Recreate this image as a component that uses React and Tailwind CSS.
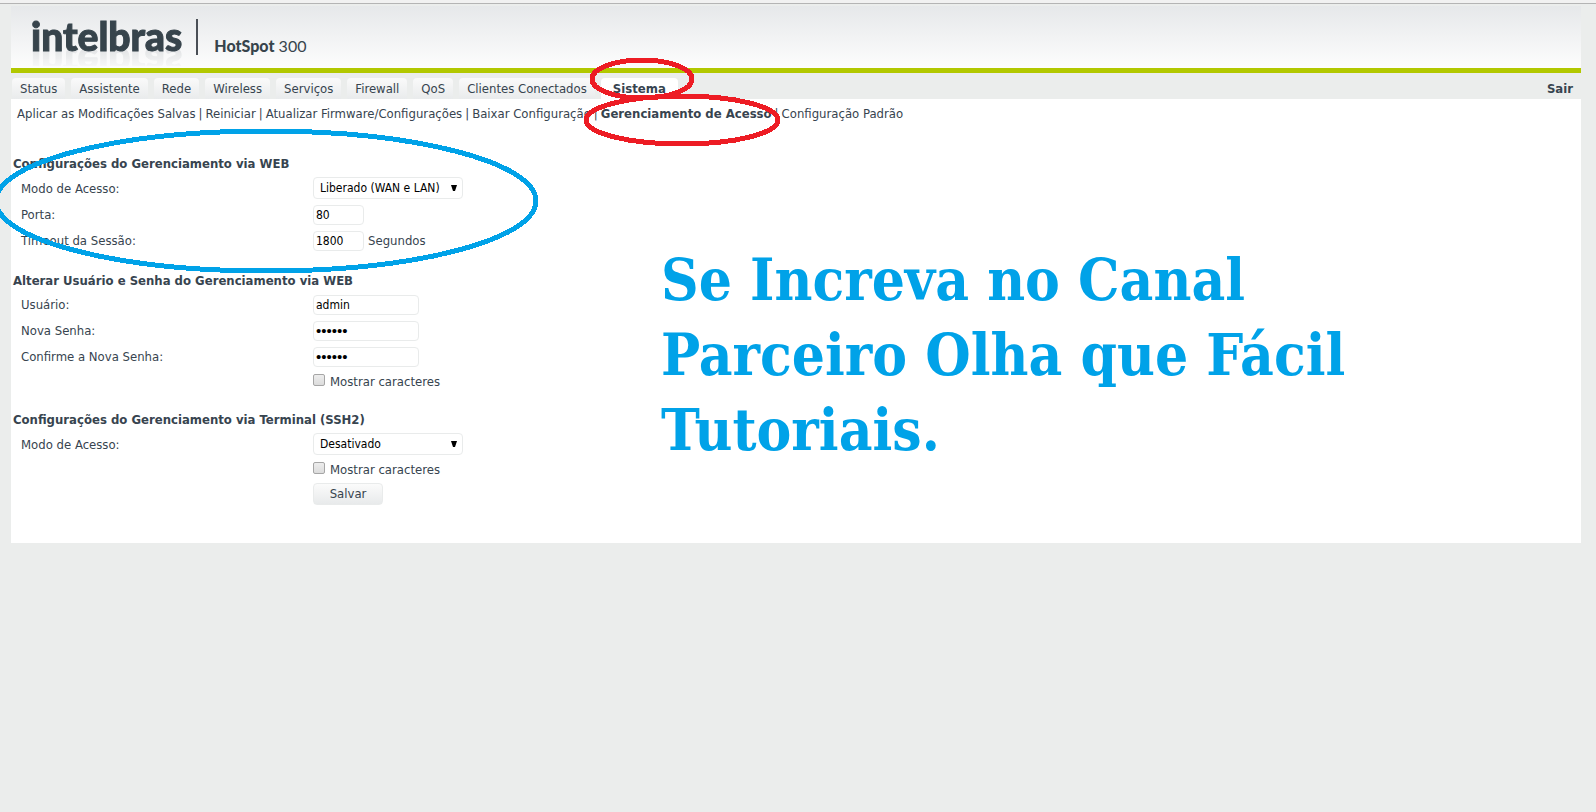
const TABS = [
  "Status",
  "Assistente",
  "Rede",
  "Wireless",
  "Serviços",
  "Firewall",
  "QoS",
  "Clientes Conectados",
];

const SUBMENU = [
  "Aplicar as Modificações Salvas",
  "Reiniciar",
  "Atualizar Firmware/Configurações",
  "Baixar Configuração",
  "Gerenciamento de Acesso",
  "Configuração Padrão",
];

const FIELD =
  "h-5 rounded border border-[#e9ebeb] bg-white px-0.5 text-black outline-none";
const PASSWORD = "font-['Liberation_Sans',sans-serif] text-[15px] w-[106px]";

function Header() {
  return (
    <header className="flex h-[67px] border-b-5 border-[#b2c800] bg-linear-to-b from-[#e6e8ea] to-[#fdfdfd] pl-5">
      <div className="mt-2 h-13 overflow-hidden">
        <div className="font-['Lato','Liberation_Sans',sans-serif] text-[39px] leading-[44px] font-black text-[#37444c] [-webkit-text-stroke:1px_#37444c] [-webkit-box-reflect:below_-17px_linear-gradient(transparent_30%,rgba(0,0,0,0.14))]">
          intelbras
        </div>
      </div>
      <div className="mt-[13px] ml-[14px] h-9 w-0.5 bg-[#4a4f56]" />
      <p className="mt-[30px] ml-4 font-['Lato','Liberation_Sans',sans-serif] text-base leading-5 text-[#37444c]">
        <span className="font-black">HotSpot</span> 300
      </p>
    </header>
  );
}

function Nav() {
  return (
    <nav className="flex h-[26px] items-end pl-px">
      <div className="flex items-end gap-1.5">
        {TABS.map((tab) => (
          <a
            key={tab}
            href="#"
            className="h-[21px] rounded-t bg-linear-to-b from-[#fafafa] to-[#e9ebec] px-2 leading-[22px]"
          >
            {tab}
          </a>
        ))}
        <a href="#" className="h-[21px] rounded-t bg-white px-3 leading-[22px] font-bold">
          Sistema
        </a>
      </div>
      <a href="#" className="mr-2 ml-auto h-[21px] leading-[22px] font-bold">
        Sair
      </a>
    </nav>
  );
}

function Submenu() {
  return (
    <div className="flex h-[30px] items-center gap-[3px] pl-1.5">
      {SUBMENU.map((item, i) => (
        <span key={item} className="flex gap-[3px]">
          {i > 0 && <span>|</span>}
          <a href="#" className={item === "Gerenciamento de Acesso" ? "font-bold" : ""}>
            {item}
          </a>
        </span>
      ))}
    </div>
  );
}

function Section({ title, children }) {
  return (
    <section>
      <h2 className="h-6 leading-[26px] font-bold">{title}</h2>
      {children}
    </section>
  );
}

function Row({ label, id, children }) {
  return (
    <div className="grid min-h-[26px] grid-cols-[292px_1fr] items-center pl-2">
      <label htmlFor={id}>{label}</label>
      <div className="flex items-center">{children}</div>
    </div>
  );
}

function Select({ id, value, options }) {
  return (
    <div className="relative mt-0.5 mb-[3px] w-[150px]">
      <select
        id={id}
        defaultValue={value}
        className="block h-[22px] w-full appearance-none rounded border border-[#e9ebeb] bg-white pl-1.5 text-xs text-black"
      >
        {options.map((o) => (
          <option key={o}>{o}</option>
        ))}
      </select>
      <svg
        className="pointer-events-none absolute top-2 right-1.5"
        width="6"
        height="6"
        viewBox="0 0 6 6"
      >
        <path d="M0 0h6L4 6H2z" fill="black" />
      </svg>
    </div>
  );
}

function ShowChars({ id }) {
  return (
    <div className="flex h-[23px] items-center gap-[5px] pl-[300px]">
      <input
        id={id}
        type="checkbox"
        className="mb-1 size-3 appearance-none rounded-xs border border-[#a6a6a6] bg-linear-to-b from-[#ededed] to-[#dcdcdc]"
      />
      <label htmlFor={id}>Mostrar caracteres</label>
    </div>
  );
}

/* Hand drawn marks over the page */
function Marks() {
  return (
    <svg
      className="pointer-events-none absolute top-0 left-0"
      width="800"
      height="290"
      fill="none"
      strokeWidth="5"
      shapeRendering="crispEdges"
    >
      <ellipse cx="266" cy="201" rx="270" ry="70" stroke="#00a2e8" />
      <ellipse cx="642" cy="79" rx="50" ry="19" stroke="#ed1c24" />
      <ellipse cx="682" cy="120" rx="96" ry="24" stroke="#ed1c24" />
    </svg>
  );
}

export default function App() {
  return (
    <div className="relative min-h-screen overflow-hidden bg-[#ebedec] font-['DejaVu_Sans_Condensed','DejaVu_Sans',sans-serif] text-[13px] text-[#37444f]">
      <div className="h-1 border-b border-[#b4b4b4] bg-[#f1f1f1]" />
      <div className="mt-0.5 mr-[15px] ml-[11px]">
        <Header />
        <Nav />
        <main className="relative bg-white pb-9">
          <Submenu />
          <form className="flex flex-col gap-[14px] pt-[22px] pl-0.5">
            <Section title="Configurações do Gerenciamento via WEB">
              <Row label="Modo de Acesso:" id="web-mode">
                <Select
                  id="web-mode"
                  value="Liberado (WAN e LAN)"
                  options={["Liberado (WAN e LAN)", "Desativado"]}
                />
              </Row>
              <Row label="Porta:" id="port">
                <input id="port" defaultValue="80" className={`${FIELD} w-[51px] text-xs`} />
              </Row>
              <Row label="Timeout da Sessão:" id="timeout">
                <input id="timeout" defaultValue="1800" className={`${FIELD} w-[51px] text-xs`} />
                <span className="ml-1">Segundos</span>
              </Row>
            </Section>

            <Section title="Alterar Usuário e Senha do Gerenciamento via WEB">
              <Row label="Usuário:" id="user">
                <input id="user" defaultValue="admin" className={`${FIELD} w-[106px] text-xs`} />
              </Row>
              <Row label="Nova Senha:" id="pass">
                <input id="pass" type="password" defaultValue="123456" className={`${FIELD} ${PASSWORD}`} />
              </Row>
              <Row label="Confirme a Nova Senha:" id="pass2">
                <input id="pass2" type="password" defaultValue="123456" className={`${FIELD} ${PASSWORD}`} />
              </Row>
              <ShowChars id="show-web" />
            </Section>

            <Section title="Configurações do Gerenciamento via Terminal (SSH2)">
              <Row label="Modo de Acesso:" id="ssh-mode">
                <Select id="ssh-mode" value="Desativado" options={["Desativado", "Ativado"]} />
              </Row>
              <ShowChars id="show-ssh" />
              <div className="flex h-[26px] items-center pl-[300px]">
                <button
                  type="button"
                  className="h-[22px] w-[70px] rounded border border-[#e9ebeb] bg-linear-to-b from-[#fbfbfb] to-[#e8eaeb]"
                >
                  Salvar
                </button>
              </div>
            </Section>
          </form>

          <p className="absolute top-[144px] left-[650px] font-['DejaVu_Serif_Condensed','DejaVu_Serif',serif] text-[58px] leading-[75px] font-bold whitespace-nowrap text-[#00a2e8]">
            Se Increva no Canal
            <br />
            Parceiro Olha que Fácil
            <br />
            Tutoriais.
          </p>
        </main>
      </div>
      <Marks />
    </div>
  );
}
